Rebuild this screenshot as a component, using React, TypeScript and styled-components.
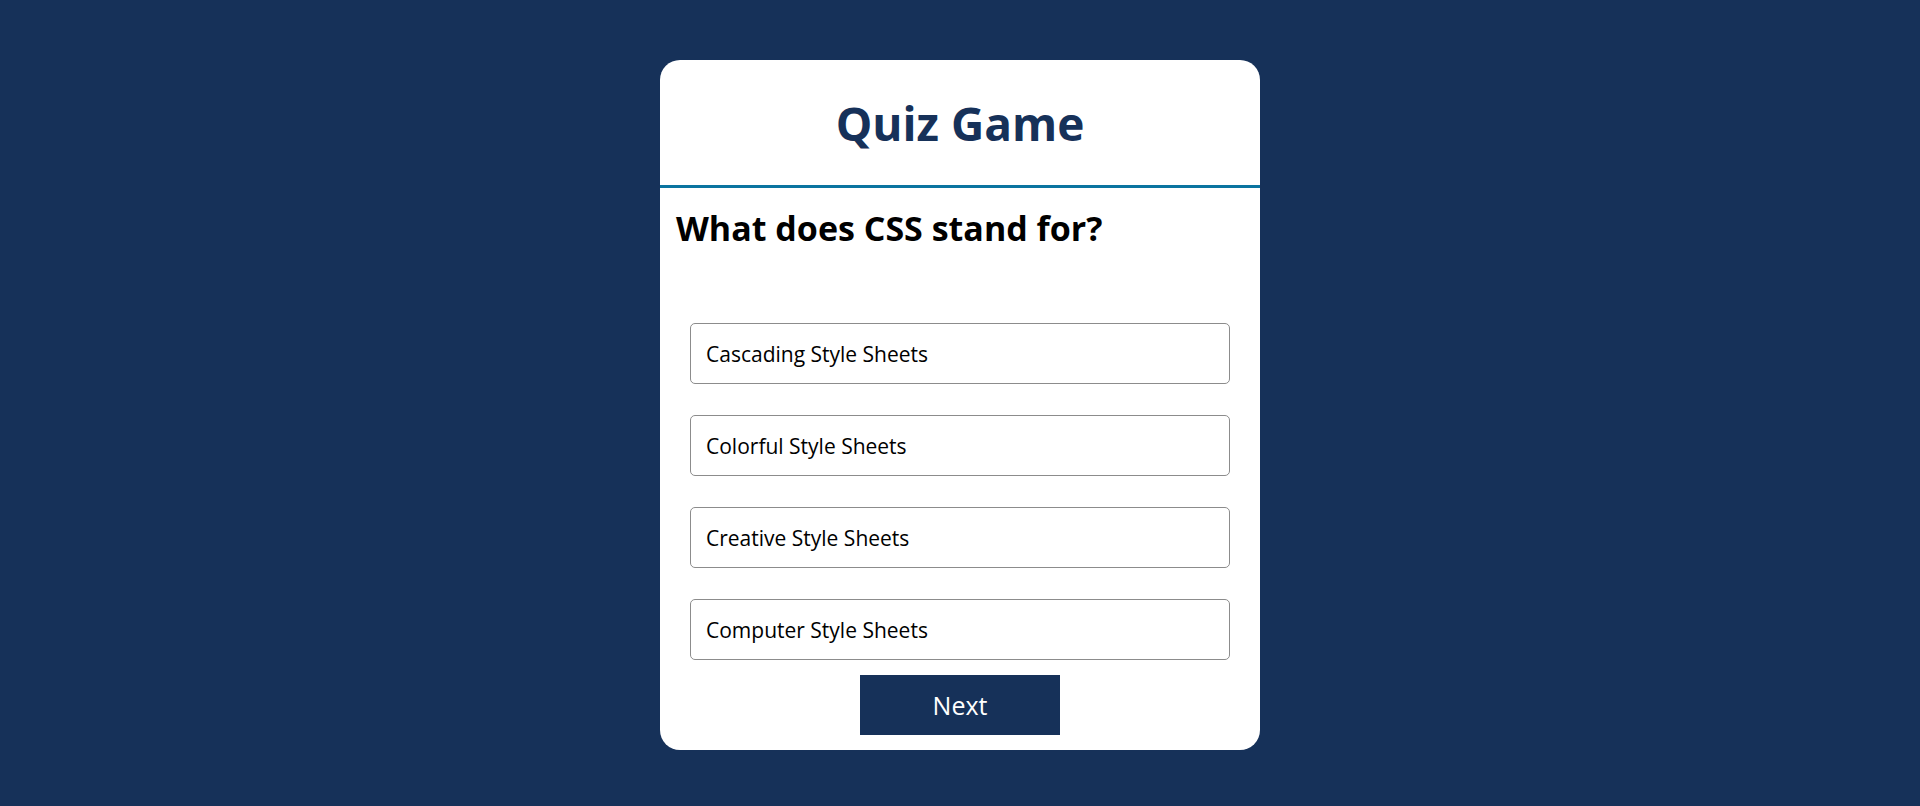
import React, { useState } from "react"
import styled, { createGlobalStyle } from "styled-components"

const GlobalStyle = createGlobalStyle`
  html, body {
    margin: 0;
    padding: 0;
    background: #163159;
    font-family: "Open Sans", "Noto Sans", sans-serif;
  }
`

const Page = styled.div`
  min-height: 806px;
  display: flex;
  justify-content: center;
  align-items: flex-start;
  padding-top: 60px;
  box-sizing: border-box;
`

const Card = styled.div`
  width: 600px;
  background: #fff;
  border-radius: 20px;
  overflow: hidden;
  display: flex;
  flex-direction: column;
`

const Header = styled.div`
  height: 125px;
  display: flex;
  align-items: center;
  justify-content: center;
  border-bottom: 3px solid #0b74a0;
`

const Title = styled.h1`
  margin: 0;
  font-size: 46px;
  font-weight: 700;
  color: #163159;
`

const Question = styled.h2`
  margin: 20px 0 0 16px;
  font-size: 34px;
  line-height: 40px;
  font-weight: 700;
  color: #000;
`

const Options = styled.div`
  margin: 75px 30px 0;
  display: flex;
  flex-direction: column;
  gap: 31px;
`

const Option = styled.button<{ $selected?: boolean }>`
  height: 61px;
  box-sizing: border-box;
  border: 1px solid #8c8c8c;
  border-radius: 5px;
  background: ${(p) => (p.$selected ? "#e8f1f8" : "#fff")};
  padding: 0 15px;
  text-align: left;
  font-family: inherit;
  font-size: 21px;
  color: #000;
  cursor: pointer;
`

const NextButton = styled.button`
  align-self: center;
  margin: 15px 0 15px;
  width: 200px;
  height: 60px;
  border: none;
  background: #163159;
  color: #fff;
  font-family: inherit;
  font-size: 25px;
  cursor: pointer;
`

const answers = [
  "Cascading Style Sheets",
  "Colorful Style Sheets",
  "Creative Style Sheets",
  "Computer Style Sheets",
]

export default function App() {
  const [picked, setPicked] = useState<number | null>(null)

  return (
    <>
      <GlobalStyle />
      <Page>
        <Card>
          <Header>
            <Title>Quiz Game</Title>
          </Header>
          <Question>What does CSS stand for?</Question>
          <Options>
            {answers.map((a, i) => (
              <Option key={a} $selected={picked === i} onClick={() => setPicked(i)}>
                {a}
              </Option>
            ))}
          </Options>
          <NextButton>Next</NextButton>
        </Card>
      </Page>
    </>
  )
}
